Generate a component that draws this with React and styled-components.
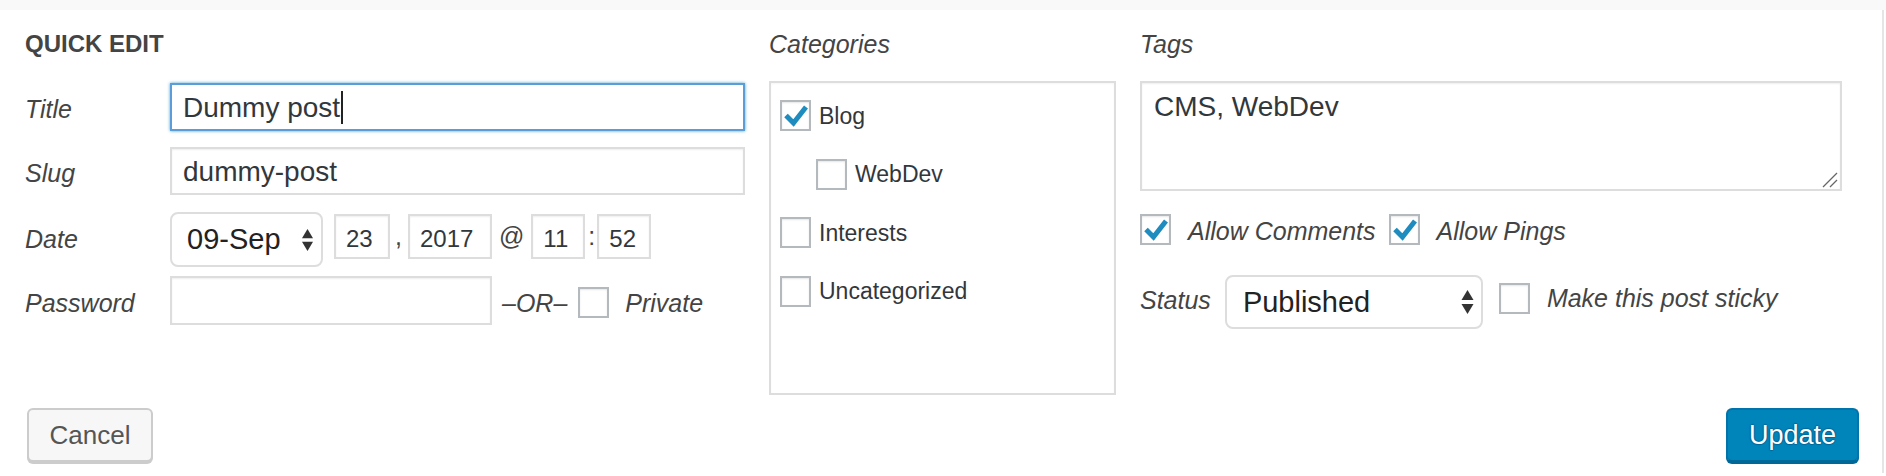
import React from "react";
import styled, { createGlobalStyle } from "styled-components";

const GlobalStyle = createGlobalStyle`
	html, body {
		margin: 0;
		padding: 0;
		background: #fff;
	}
	body {
		font-family: "Liberation Sans", Arial, sans-serif;
		color: #444;
	}
	* {
		box-sizing: border-box;
	}
`;

const Page = styled.div`
	width: 1886px;
`;

const TopStrip = styled.div`
	height: 10px;
	background: #f9f9f9;
`;

const Panel = styled.div`
	width: 1884px;
	border-right: 2px solid #e5e5e5;
	background: #fff;
	padding: 20px 0 11px 0;
`;

const Columns = styled.div`
	display: flex;
	align-items: flex-start;
	gap: 24px;
	padding: 0 40px 0 25px;
`;

const Column = styled.div`
	width: ${p => p.$w}px;
	flex-shrink: 0;
`;

const Legend = styled.div`
	font-size: 24px;
	font-weight: 700;
	line-height: 28px;
	color: #444;
	margin-bottom: 25px;
`;

const ColTitle = styled.div`
	font-size: 25px;
	font-style: italic;
	line-height: 28px;
	color: #444;
	margin-bottom: 23px;
`;

const FieldRow = styled.div`
	display: flex;
	align-items: flex-start;
	margin-top: ${p => p.$mt || 0}px;
`;

const Label = styled.div`
	width: 145px;
	flex-shrink: 0;
	font-size: 25px;
	font-style: italic;
	line-height: 28px;
	padding-top: ${p => p.$pt || 12}px;
	color: #444;
`;

const TextField = styled.div`
	flex: ${p => (p.$w ? "0 0 auto" : "1")};
	width: ${p => (p.$w ? `${p.$w}px` : "auto")};
	height: ${p => p.$h || 48}px;
	border: 2px solid ${p => (p.$focus ? "#5b9dd9" : "#ddd")};
	box-shadow: ${p =>
		p.$focus
			? "0 0 3px rgba(30, 140, 190, 0.8)"
			: "inset 0 1px 2px rgba(0, 0, 0, 0.07)"};
	background: #fff;
	padding: 2px 11px 0;
	font-size: 28px;
	line-height: 42px;
	color: #32373c;
	white-space: nowrap;
`;

const Caret = styled.span`
	display: inline-block;
	width: 2px;
	height: 33px;
	background: #222;
	vertical-align: -7px;
	margin-left: 1px;
`;

const SelectBox = styled.div`
	display: flex;
	align-items: center;
	justify-content: space-between;
	width: ${p => p.$w}px;
	height: ${p => p.$h}px;
	margin-left: ${p => p.$ml || 0}px;
	border: 2px solid #ddd;
	border-radius: 8px;
	background: #fff;
	padding: 0 ${p => p.$pr}px 0 ${p => p.$pl}px;
	font-size: 29px;
	color: #222;
	flex-shrink: 0;
`;

const NumField = styled.div`
	width: ${p => p.$w}px;
	height: 45px;
	margin-top: 2px;
	border: 2px solid #ddd;
	box-shadow: inset 0 1px 2px rgba(0, 0, 0, 0.07);
	padding: 3px 10px 0;
	font-size: 24px;
	line-height: 39px;
	color: #32373c;
	flex-shrink: 0;
`;

const Sep = styled.span`
	font-size: 25px;
	line-height: 45px;
	margin: 2px ${p => p.$r}px 0 ${p => p.$l}px;
	color: #444;
`;

const Italic = styled.span`
	font-size: 25px;
	font-style: italic;
	line-height: 28px;
	color: #444;
	margin-left: ${p => p.$ml || 0}px;
	padding-top: ${p => p.$pt || 0}px;
	padding-bottom: ${p => p.$pb || 0}px;
	white-space: nowrap;
`;

const Box = styled.span`
	display: inline-flex;
	align-items: center;
	justify-content: center;
	width: 31px;
	height: 31px;
	flex-shrink: 0;
	border: 2px solid #b4b9be;
	background: #fff;
	box-shadow: inset 0 1px 2px rgba(0, 0, 0, 0.1);
	margin-left: ${p => p.$ml || 0}px;
	margin-top: ${p => p.$mt || 0}px;
	margin-bottom: ${p => p.$mb || 0}px;
`;

const CatBox = styled.div`
	height: 314px;
	border: 2px solid #ddd;
	box-shadow: inset 0 1px 2px rgba(0, 0, 0, 0.04);
	padding: 17px 9px;
`;

const CatItem = styled.div`
	display: flex;
	align-items: center;
	height: 31px;
	padding-left: ${p => p.$indent || 0}px;
	& + & {
		margin-top: 27.5px;
	}
`;

const CatLabel = styled.span`
	font-size: 23px;
	line-height: 28px;
	color: #32373c;
	margin-left: 8px;
`;

const TagsArea = styled.div`
	position: relative;
	height: 110px;
	border: 2px solid #ddd;
	box-shadow: inset 0 1px 2px rgba(0, 0, 0, 0.07);
	padding: 8px 12px;
	font-size: 28px;
	color: #32373c;
`;

const Grip = styled.svg`
	position: absolute;
	right: 2px;
	bottom: 1px;
`;

const InlineRow = styled.div`
	display: flex;
	align-items: center;
	margin-top: ${p => p.$mt || 0}px;
`;

const ButtonRow = styled.div`
	display: flex;
	justify-content: space-between;
	align-items: flex-start;
	margin-top: 13px;
	padding: 0 23px 0 27px;
`;

const Button = styled.button`
	width: ${p => p.$w}px;
	height: 54px;
	border-radius: 6px;
	font-family: "Liberation Sans", Arial, sans-serif;
	font-size: ${p => (p.$primary ? 27 : 26)}px;
	padding: 0;
	cursor: pointer;
	border: 2px solid ${p => (p.$primary ? "#0073aa" : "#ccc")};
	border-bottom-color: ${p => (p.$primary ? "#006799" : "#ccc")};
	background: ${p => (p.$primary ? "#0085ba" : "#f7f7f7")};
	color: ${p => (p.$primary ? "#fff" : "#555")};
	box-shadow: 0 2px 0 ${p => (p.$primary ? "#006799" : "#ccc")};
	text-shadow: ${p =>
		p.$primary
			? "0 -1px 1px #006799, 1px 0 1px #006799, 0 1px 1px #006799, -1px 0 1px #006799"
			: "none"};
`;

function Check() {
	return (
		<svg width="27" height="27" viewBox="0 0 27 27">
			<polyline
				points="4,13.5 11.5,21 24,5"
				fill="none"
				stroke="#1e8cbe"
				strokeWidth="5"
				strokeLinejoin="miter"
			/>
		</svg>
	);
}

function Checkbox({ checked, ...rest }) {
	return <Box {...rest}>{checked && <Check />}</Box>;
}

function Arrows({ w = 12, h = 24 }) {
	return (
		<svg width={w} height={h} viewBox="0 0 12 24">
			<polygon points="0,10 6,0 12,10" fill="#333" />
			<polygon points="0,14 12,14 6,24" fill="#333" />
		</svg>
	);
}

const categories = [
	{ name: "Blog", checked: true },
	{ name: "WebDev", indent: 36 },
	{ name: "Interests" },
	{ name: "Uncategorized" }
];

export default function App() {
	return (
		<>
			<GlobalStyle />
			<Page>
				<TopStrip />
				<Panel>
					<Columns>
						<Column $w={720}>
							<Legend>QUICK EDIT</Legend>
							<FieldRow>
								<Label>Title</Label>
								<TextField $focus>
									Dummy post
									<Caret />
								</TextField>
							</FieldRow>
							<FieldRow $mt={16}>
								<Label>Slug</Label>
								<TextField>dummy-post</TextField>
							</FieldRow>
							<FieldRow $mt={17}>
								<Label $pt={13}>Date</Label>
								<SelectBox $w={153} $h={55} $pl={15} $pr={8}>
									<span>09-Sep</span>
									<Arrows w={11} h={24} />
								</SelectBox>
								<NumField $w={56} style={{ marginLeft: 11 }}>
									23
								</NumField>
								<Sep $l={5} $r={6}>
									,
								</Sep>
								<NumField $w={84}>2017</NumField>
								<Sep $l={7} $r={7}>
									@
								</Sep>
								<NumField $w={54}>11</NumField>
								<Sep $l={3} $r={2}>
									:
								</Sep>
								<NumField $w={54}>52</NumField>
							</FieldRow>
							<FieldRow $mt={9}>
								<Label $pt={13}>Password</Label>
								<TextField $w={322} $h={49} />
								<Italic $ml={10} $pt={13}>
									–OR–
								</Italic>
								<Checkbox $ml={11} $mt={11} />
								<Italic $ml={16} $pt={13}>
									Private
								</Italic>
							</FieldRow>
						</Column>

						<Column $w={347}>
							<ColTitle>Categories</ColTitle>
							<CatBox>
								{categories.map(c => (
									<CatItem key={c.name} $indent={c.indent}>
										<Checkbox checked={c.checked} />
										<CatLabel>{c.name}</CatLabel>
									</CatItem>
								))}
							</CatBox>
						</Column>

						<Column $w={702}>
							<ColTitle>Tags</ColTitle>
							<TagsArea>
								CMS, WebDev
								<Grip width="16" height="16" viewBox="0 0 16 16">
									<line x1="1" y1="15" x2="15" y2="1" stroke="#666" strokeWidth="1.3" />
									<line x1="8" y1="15" x2="15" y2="8" stroke="#666" strokeWidth="1.3" />
								</Grip>
							</TagsArea>
							<InlineRow $mt={23}>
								<Checkbox checked />
								<Italic $ml={17} $pt={3}>
									Allow Comments
								</Italic>
								<Checkbox checked $ml={13} />
								<Italic $ml={17} $pt={3}>
									Allow Pings
								</Italic>
							</InlineRow>
							<InlineRow $mt={30}>
								<Italic $pb={5}>Status</Italic>
								<SelectBox $w={258} $h={54} $ml={14} $pl={16} $pr={7}>
									<span>Published</span>
									<Arrows w={13} h={24} />
								</SelectBox>
								<Checkbox $ml={16} $mb={7} />
								<Italic $ml={17} $pb={8}>
									Make this post sticky
								</Italic>
							</InlineRow>
						</Column>
					</Columns>

					<ButtonRow>
						<Button $w={126}>Cancel</Button>
						<Button $w={133} $primary>
							Update
						</Button>
					</ButtonRow>
				</Panel>
			</Page>
		</>
	);
}
